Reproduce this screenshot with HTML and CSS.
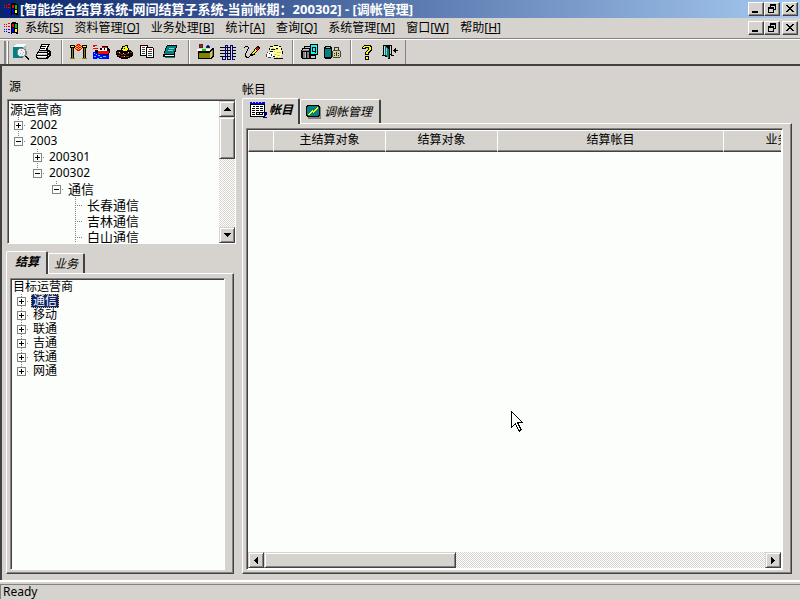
FILE: index.html
```html
<!DOCTYPE html>
<html lang="zh-CN">
<head>
<meta charset="utf-8">
<title>智能综合结算系统</title>
<link rel="stylesheet" href="styles.css">
</head>
<body>
<svg class="defs" aria-hidden="true">
  <symbol id="app" viewBox="0 0 16 12">
    <path fill="#f00" d="M1 2h1v1H1zM3 2h1v1H3zM5 1h2v1H5zM1 4h1v1H1zM3 4h1v1H3zM5 4h2v1H5z"/>
    <path fill="#00f" d="M1 7h1v1H1zM3 7h1v1H3zM5 7h2v1H5zM1 9h1v1H1zM3 9h1v1H3zM5 10h2v1H5z"/>
    <path d="M8 1h1V0h4v1h2v11h-2v-1H9v1H8z"/>
    <path fill="#f00" d="M9 2h2v3H9z"/><path fill="#0c0" d="M12 2h2v4h-2z"/><path fill="#00f" d="M9 6h2v4H9z"/><path fill="#ff0" d="M12 7h2v3h-2z"/>
  </symbol>
  <symbol id="min" viewBox="0 0 12 10"><path d="M2 7h6v2H2z"/></symbol>
  <symbol id="restore" viewBox="0 0 12 10"><path d="M4 0h6v6H8V5h1V2H5v1H4zM2 3h6v6H2zM3 5v3h4V5z" fill-rule="evenodd"/></symbol>
  <symbol id="close" viewBox="0 0 12 10"><path d="M2 1h2v1h1v1h2V2h1V1h2v1H9v1H8v1H7v1h1v1h1v1h1v1H8V7H7V6H5v1H4v1H2V7h1V6h1V5h1V4H4V3H3V2H2z"/></symbol>
  <symbol id="up" viewBox="0 0 7 4"><path d="M3 0h1v1h1v1h1v1h1v1H0V3h1V2h1V1h1z"/></symbol>
  <symbol id="down" viewBox="0 0 7 4"><path d="M0 0h7v1H6v1H5v1H4v1H3V3H2V2H1V1H0z"/></symbol>
  <symbol id="left" viewBox="0 0 4 7"><path d="M3 0h1v7H3V6H2V5H1V4H0V3h1V2h1V1h1z"/></symbol>
  <symbol id="right" viewBox="0 0 4 7"><path d="M0 0h1v1h1v1h1v1h1v1H3v1H2v1H1v1H0z"/></symbol>
</svg>

<header class="titlebar">
  <svg class="app-icon"><use href="#app"/></svg>
  <h1>[智能综合结算系统-网间结算子系统-当前帐期：200302] - [调帐管理]</h1>
  <div class="win-buttons">
    <button aria-label="最小化"><svg><use href="#min"/></svg></button>
    <button aria-label="还原"><svg><use href="#restore"/></svg></button>
    <button class="apart" aria-label="关闭"><svg><use href="#close"/></svg></button>
  </div>
</header>

<nav class="menubar">
  <svg class="app-icon"><use href="#app"/></svg>
  <div class="menus">
    <button>系统[<u>S</u>]</button>
    <button>资料管理[<u>O</u>]</button>
    <button>业务处理[<u>B</u>]</button>
    <button>统计[<u>A</u>]</button>
    <button>查询[<u>Q</u>]</button>
    <button>系统管理[<u>M</u>]</button>
    <button>窗口[<u>W</u>]</button>
    <button>帮助[<u>H</u>]</button>
  </div>
  <div class="win-buttons">
    <button aria-label="最小化窗口"><svg><use href="#min"/></svg></button>
    <button aria-label="还原窗口"><svg><use href="#restore"/></svg></button>
    <button class="apart" aria-label="关闭窗口"><svg><use href="#close"/></svg></button>
  </div>
</nav>

<div class="toolbar">
  <div class="tools">
    <span class="grip"></span>
    <button aria-label="预览"><svg viewBox="0 0 17 17"><path fill="#008284" d="M1 3h10v11H1z"/><path fill="#fff" d="M1 3l3-3h10l-3 3z"/><path fill="#a5c6c6" d="M11 3l3-3v6h-3z"/><path fill="#848284" d="M7 4h5v1h2v2h1v4h-1v1h-2v1H7v-1H6v-1H5V6h1V5h1z"/><path fill="#e7f3f3" d="M7 5h5v1h1v5h-1v1H7v-1H6V6h1z"/><path fill="#a5b6b6" d="M9 6h1v1H9zM11 8h1v1h-1zM8 9h1v1H8zM10 10h1v1h-1z"/><path d="M13 12h2v1h1v1h1v2h-1v-1h-1v-1h-1v-1h-1z"/></svg></button>
    <button aria-label="打印"><svg viewBox="0 0 17 17"><path d="M6 0h9v1h-1v2h-1v3h2v1h1v5h-1v1h-1v1h-1v1H2v-1H1v-4h1V8h1V7h1V5h1V2h1z"/><path fill="#fff" d="M6 1h7v1h-1v2h-1v2H5V5h1V3h1V1zM3 9h9v1H3zM2 12h10v1H2zM13 8h1v1h-1z"/><path d="M7 2h4v1H7zM6 4h4v1H6z"/><path fill="#c6c3c6" d="M4 7h8v1H4zM2 10h10v1H2zM3 13h8v1H3zM13 11h1v1h-1z"/></svg></button>
    <span class="sep"></span>
    <button aria-label="网间"><svg viewBox="0 0 17 17"><path d="M0 1h5v3H4v11H1V4H0zM12 1h5v3h-1v11h-3V4h-1z"/><path fill="#ff0" d="M1 2h3v1H1zM13 2h3v1h-3z"/><path fill="#848200" d="M2 4h1v10H2zM14 4h1v10h-1zM0 14h5v1H0zM12 14h5v1h-5z"/><path fill="#f00" d="M7 0h3v1H7zM6 1h2v1H6zM9 1h2v1H9zM5 2h1v1H5zM8 2h1v1H8zM11 2h1v1h-1zM6 3h2v1H6zM9 3h2v1H9zM5 4h1v1H5zM8 4h1v1H8zM11 4h1v1h-1zM6 5h2v1H6zM9 5h2v1H9zM7 6h3v1H7z"/><path fill="#fb3" d="M8 1h1v1H8zM6 2h2v1H6zM9 2h2v1H9zM8 3h1v1H8zM6 4h2v1H6zM9 4h2v1H9zM8 5h1v1H8z"/></svg></button>
    <button aria-label="船运"><svg viewBox="0 0 17 17"><path d="M2 6h5V4h2V2h6v2h1v1h1v4h-1v3H4V9H2z"/><path fill="#f00" d="M0 1h4v1H2v2h3v1H0zM5 7h11v2h-1v1H5zM9 3h5v1H9z"/><path fill="#fff" d="M9 4h2v2H9zM12 4h2v2h-2zM0 3h2v1H0zM5 6h9v1H5z"/><path fill="#00f" d="M0 8h3v1h2v1h5v1h6v4H0z"/><path fill="#0ff" d="M1 9h1v1H1zM3 10h1v1H3zM1 12h2v1H1zM5 11h2v1H5zM7 13h2v1H7zM10 12h3v1h-3zM4 14h2v1H4z"/></svg></button>
    <button aria-label="结算"><svg viewBox="0 0 17 17"><path d="M6 2h3V1h3v3h1v2h2v1h1v1h1v4h-1v1h-2v1h-2v1H5v-1H3v-1H1v-2H0V7h1V6h4V4h1z"/><path fill="#ff0" d="M6 5h1V3h2V2h2v2h1v2h-1v1H7V6H6z"/><path d="M8 4h1v1H8z"/><path fill="#a42000" d="M1 8h2v1H1zM3 9h2v1H3zM5 10h2v1H5zM8 10h2v1H8zM11 9h2v1h-2zM14 8h2v1h-2zM2 11h2v1H2zM5 12h3v1H5zM10 12h3v1h-3z"/><path fill="#fc6" d="M3 8h1v1H3zM7 9h1v1H7zM12 8h1v1h-1zM8 12h1v1H8z"/></svg></button>
    <button aria-label="对照"><svg viewBox="0 0 17 17"><path d="M1 1h8v2h5v1h1v10H7v-2H1z"/><path fill="#fff" d="M2 2h6v9H2zM8 4h6v9H8z"/><path d="M7 3h1v10H7z"/><path fill="#444" d="M3 5h3v1H3zM3 7h3v1H3zM3 9h3v1H3zM9 7h4v1H9zM9 9h4v1H9zM9 11h4v1H9z"/><path fill="#f00" d="M3 3h3v1H3zM10 5h3v1h-3z"/></svg></button>
    <button aria-label="记事"><svg viewBox="0 0 17 17"><path d="M5 1h10v3h-1v4h-1v6H3v-1H1v-3h1V7h1V4h1V2h1z"/><path fill="#008284" d="M5 2h9v2h-1v3h-1v3H2V9h1V7h1V4h1z"/><path fill="#fff" d="M3 11h9v1H3zM6 0h1v1H6zM8 0h1v1H8zM10 0h1v1h-1zM12 0h1v1h-1z"/><path fill="#008284" d="M3 13h10v1H3z"/><path fill="#8cc" d="M7 4h5v1H7zM6 6h5v1H6z"/></svg></button>
    <span class="sep"></span>
    <button aria-label="归档"><svg viewBox="0 0 17 17"><path d="M1 7h11l3-3h2v8l-3 3H1z"/><path fill="#848200" d="M2 9h11v5H2zM15 6h1v6h-1z"/><path fill="#c6c384" d="M13 8l2-2v6l-2 2z"/><path fill="#333" d="M2 0h4v4H2zM9 2h1V1h2v1h1v2H9z"/><path fill="#e00" d="M3 1h2v2H3z"/><path fill="#00f" d="M10 2h2v2h-2z"/><path fill="#fff" d="M0 5h5v2H0zM9 5h4v2H9z"/><path fill="#0d0" d="M5 5h4v2H5z"/></svg></button>
    <button aria-label="统计"><svg viewBox="0 0 17 17"><path d="M0 3h5v1H0zM0 6h5v1H0zM0 9h5v1H0zM0 12h5v1H0zM6 3h4v1H6zM6 6h4v1H6zM6 9h4v1H6zM6 12h4v1H6zM12 3h4v1h-4zM12 6h4v1h-4zM12 9h4v1h-4zM12 12h4v1h-4z"/><path fill="none" stroke="#00007b" d="M2.500 13v2h3V1.500h2V13v2h3V1.500h2V13v2h2"/></svg></button>
    <button aria-label="编辑"><svg viewBox="0 0 17 17"><path d="M1 3h1V2h3v1h1v2H5v2H4v2H3v3h1v1h2v-1h1v1H6v1H3v-1H2V9h1V7h1V5h1V3H2v1H1zM8 9h1V8h1V7h1V5h1V4h1V3h1V2h2v1h1v2h-1v1h-1v1h-1v1h-1v1h-1v2h-2v1H7v-2h1z"/><path fill="#ff0" d="M9 9h1V8h1V7h1V5h1v1h1v1h-1v1h-1v1h-1v1H9z"/><path fill="#f00" d="M14 3h1v1h1v1h-1v1h-1V5h-1V4h1z"/></svg></button>
    <button aria-label="处理"><svg viewBox="0 0 17 17"><path fill="#ffffa5" d="M4 3h3V2h6v1h2v2h1v6h-1v2h-2v1H9v-1H7v-2H6V8H4V6H3V4h1z"/><path fill="#dece42" d="M6 4h2v1H6zM9 5h3v1H9zM8 7h1v1H8zM11 8h4v1h-4zM8 10h2v1H8zM11 11h3v1h-3zM10 13h2v1h-2z"/><path d="M4 2h3v1H4zM8 1h4v1H8zM13 2h2v1h-2zM15 4h1v2h-1zM3 4h1v2H3zM5 5h4v1H5zM4 7h3v1H4zM10 4h2v1h-2zM16 7h1v3h-1zM7 12h2v1H7zM8 14h9v1H8z"/><path fill="#fff" d="M1 8h6v5H1z"/><path fill="#444" d="M1 8h1v1H1zM0 10h1v3H0zM3 9h1v1H3zM5 10h1v2H5zM2 13h3v1H2z"/></svg></button>
    <span class="sep"></span>
    <button aria-label="查询"><svg viewBox="0 0 17 17"><path d="M0 6h1V4h2V2h6V0h8v11h-2v4H1v-1H0z"/><path fill="#848284" d="M1 6h7v1H1zM2 8h2v6H2zM6 8h2v6H6z"/><path fill="#c6c3c6" d="M4 3h5v1H4zM2 5h6v1H2zM4 8h1v6H4zM10 12h4v2h-4z"/><path fill="#0ff" d="M10 1h6v9h-6z"/><path fill="none" stroke="#000" d="M11.500 3.500h3v4h-3zM13 7l2 2"/></svg></button>
    <button aria-label="加密"><svg viewBox="0 0 17 17"><path d="M0 3h1V2h6v1h1v11H7v1H1v-1H0z"/><path fill="#008284" d="M1 5h6v8H1z"/><path fill="#8cc" d="M2 3h4v1H2z"/><path fill="none" stroke="#333" d="M10.500 7V3.500h4V7"/><path fill="#444" d="M9 6h7v1h1v6h-1v1H9v-1H8V7h1z"/><path fill="#d6d384" d="M9 7h7v6H9z"/><path fill="#333" d="M12 8h1v4h-1zM10 9h1v1h-1zM14 9h1v1h-1zM10 11h1v1h-1zM14 11h1v1h-1z"/></svg></button>
    <span class="sep"></span>
    <button aria-label="帮助"><svg viewBox="0 0 17 17"><path d="M5 1h7v1h1v5h-1v1h-1v1h-1v2H6V8h1V7h1V6h1V4H7v1H3V3h1V2h1zM6 12h4v4H6z"/><path fill="#ff0" d="M5 2h6v1h1v3h-1v1h-1v1H9v2H7V8h1V7h1V6h1V3H6v1H4V3h1zM7 13h2v2H7z"/></svg></button>
    <button aria-label="退出"><svg viewBox="0 0 17 17"><path d="M1 1h9v10H8v4H6v-2H3v-1H1zM2 2v9h1V2zM8 2v8h1V2z" fill-rule="evenodd"/><path fill="#008284" d="M3 2l4 3v9l-4-3z"/><path fill="#8cc" d="M4 4h1v7H4z"/><path d="M11 6h1V5h1V4h1v2h2v1h-2v2h-1V8h-1V7h-1zM0 11h1v1H0zM9 11h3v1H9z"/></svg></button>
  </div>
</div>

<main class="workspace">
  <section class="side">
    <h2 class="label">源</h2>
    <div class="sunken source">
      <ul class="tree">
        <li class="root">源运营商</li>
        <li class="row"><span class="joint"><button class="expander plus" aria-label="展开 2002"></button></span><span class="num">2002</span></li>
        <li class="row"><span class="joint last"><button class="expander" aria-label="折叠 2003"></button></span><span class="num">2003</span></li>
        <li class="row level2"><span class="joint"><button class="expander plus" aria-label="展开 200301"></button></span><span class="num">200301</span></li>
        <li class="row level2"><span class="joint last"><button class="expander" aria-label="折叠 200302"></button></span><span class="num">200302</span></li>
        <li class="row level3"><span class="joint last"><button class="expander" aria-label="折叠 通信"></button></span><span>通信</span></li>
        <li class="row level4"><span class="joint leaf"></span><span>长春通信</span></li>
        <li class="row level4"><span class="joint leaf"></span><span>吉林通信</span></li>
        <li class="row level4"><span class="joint leaf"></span><span>白山通信</span></li>
      </ul>
      <div class="scroll vertical">
        <button class="arrow" aria-label="向上滚动"><svg class="glyph-v"><use href="#up"/></svg></button>
        <span class="thumb"></span>
        <button class="arrow end" aria-label="向下滚动"><svg class="glyph-v"><use href="#down"/></svg></button>
      </div>
    </div>
    <div class="tabs">
      <button class="tab active">结算</button>
      <button class="tab">业务</button>
    </div>
    <div class="panel">
      <div class="sunken target">
        <ul class="tree compact">
          <li class="root">目标运营商</li>
          <li class="row"><span class="joint"><button class="expander plus" aria-label="展开 通信"></button></span><span class="selected">通信</span></li>
          <li class="row"><span class="joint"><button class="expander plus" aria-label="展开 移动"></button></span><span>移动</span></li>
          <li class="row"><span class="joint"><button class="expander plus" aria-label="展开 联通"></button></span><span>联通</span></li>
          <li class="row"><span class="joint"><button class="expander plus" aria-label="展开 吉通"></button></span><span>吉通</span></li>
          <li class="row"><span class="joint"><button class="expander plus" aria-label="展开 铁通"></button></span><span>铁通</span></li>
          <li class="row"><span class="joint last"><button class="expander plus" aria-label="展开 网通"></button></span><span>网通</span></li>
        </ul>
      </div>
    </div>
  </section>

  <section class="content">
    <h2 class="label low">帐目</h2>
    <div class="tabs">
      <button class="tab active wide"><svg class="tab-icon" viewBox="0 0 17 17"><path d="M0 1h15v14H0z"/><path fill="#fff" d="M1 3h13v11H1z"/><path fill="#00f" d="M0 0h2v1h1V0h2v1h1V0h2v1h1V0h2v1h1V0h3v2H0z"/><path d="M3 4h2v1H3zM6 4h3v1H6zM10 4h3v1h-3zM2 6h3v1H2zM6 6h3v1H6zM10 6h3v1h-3zM2 8h3v1H2zM6 8h3v1H6zM10 8h3v1h-3zM2 10h3v1H2zM6 10h7v3H6zM2 12h3v1H2z"/><path fill="#fff" d="M7 11h2v1H7zM10 11h2v1h-2z"/><path fill="#00007b" d="M13 10h4v3h-1v1h-1v1h2v1h-4v-2h1v-1h1v-2h-2z"/></svg>帐目</button>
      <button class="tab wide"><svg class="tab-icon" viewBox="0 0 17 17"><path fill="#848284" d="M3 4h13v12H3z"/><path d="M2 2h12v1h1v10h-1v1H2v-1H1V3h1z"/><path fill="#008284" d="M3 3h10v1h1v8h-1v1H3v-1H2V4h1z"/><path fill="#ff0" d="M3 11h1v-1h1V9h1V8h1V7h1v1h1V7h1V6h1V5h1V4h1v2h-1v1h-1v1h-1v1H9v1H8V9H7v1H6v1H5v1H3z"/></svg>调帐管理</button>
    </div>
    <div class="panel">
      <div class="sunken grid">
        <div class="viewport">
          <table>
            <colgroup><col class="c-mark"><col class="c-std"><col class="c-std"><col class="c-item"><col class="c-more"></colgroup>
            <thead><tr><th></th><th>主结算对象</th><th>结算对象</th><th>结算帐目</th><th>业务类型</th></tr></thead>
          </table>
        </div>
        <div class="scroll horizontal">
          <button class="arrow" aria-label="向左滚动"><svg class="glyph-h"><use href="#left"/></svg></button>
          <span class="thumb"></span>
          <button class="arrow end" aria-label="向右滚动"><svg class="glyph-h"><use href="#right"/></svg></button>
        </div>
      </div>
    </div>
  </section>
</main>

<footer class="status"><span>Ready</span></footer>
<svg class="pointer" viewBox="0 0 12 21" aria-hidden="true"><path fill="#fff" stroke="#000" d="M.5.500v16l4-4 3 7q1 1 2 0 1-1 0-2l-3-6h5z"/></svg>
</body>
</html>
```

FILE: styles.css
```css
:root {
  --face: #d6d3ce;
  --shade: #848284;
  --dark: #424142;
  --field: #fcfefc;
}

* { box-sizing: border-box; }

body {
  margin: 0;
  height: 100vh;
  display: flex;
  flex-direction: column;
  overflow: hidden;
  background: var(--face);
  color: #000;
  font: 12px/16px "Noto Sans", "Noto Sans CJK SC", sans-serif;
}

.defs { position: absolute; width: 0; height: 0; }
svg { shape-rendering: crispEdges; flex: none; }

button {
  margin: 0;
  padding: 0;
  border: 0;
  background: none;
  color: inherit;
  font: inherit;
}

h1, h2 { margin: 0; white-space: nowrap; }

/* Title and menu */
.titlebar, .menubar {
  flex: none;
  display: flex;
  align-items: center;
  height: 18px;
  padding: 0 2px 0 3px;
}
.titlebar {
  background: linear-gradient(to right, #0a246a, #a6caf0);
  color: #fff;
}
.titlebar h1 { margin-left: 1px; font-size: 13px; line-height: 18px; font-weight: bold; }
.app-icon { width: 16px; height: 12px; }
.menubar { height: 21px; border-bottom: 1px solid var(--shade); }
.menus { display: flex; gap: 11px; margin-left: 6px; white-space: nowrap; }

.win-buttons { display: flex; margin-left: auto; }
.win-buttons button {
  display: flex;
  width: 16px;
  height: 14px;
  padding: 1px;
  border: 1px solid;
  border-color: #fff var(--dark) var(--dark) #fff;
  background: var(--face);
  box-shadow: inset -1px -1px var(--shade);
}
.win-buttons svg { width: 12px; height: 10px; }
.win-buttons .apart { margin-left: 2px; }

/* Toolbar */
.toolbar {
  flex: none;
  height: 27px;
  border-top: 1px solid #fff;
  border-bottom: 2px solid var(--dark);
}
.tools {
  display: flex;
  align-items: stretch;
  width: max-content;
  height: 24px;
  padding-right: 3px;
  border-right: 1px solid var(--shade);
}
.tools button { display: flex; align-items: center; justify-content: center; width: 23px; }
.tools svg { width: 17px; height: 17px; }
.grip {
  width: 5px;
  margin: 1px 0 0 4px;
  border: solid;
  border-width: 0 1px;
  border-color: #fff var(--shade);
  box-shadow: inset 1px 0 var(--shade), inset -1px 0 #fff;
}
.sep { width: 2px; margin: 0 4px 0 6px; border-left: 1px solid var(--shade); border-right: 1px solid #fff; }

/* Workspace */
.workspace {
  flex: 1;
  min-height: 0;
  display: grid;
  grid-template-columns: 230px minmax(0, 1fr);
  gap: 6px;
  padding: 13px 8px 6px 4px;
  border-left: 2px solid var(--dark);
}
.side, .content { display: flex; flex-direction: column; min-height: 0; }
.label { height: 20px; padding-left: 3px; font-size: 12px; font-weight: normal; line-height: 16px; }
.content .label { padding-left: 0; }
.low { height: 19px; padding-top: 3px; }

.sunken {
  display: flex;
  background: var(--field);
  border: 1px solid;
  border-color: var(--shade) #fff #fff var(--shade);
  box-shadow: inset 1px 1px var(--dark);
  padding: 1px 0 0 1px;
  overflow: hidden;
}
.source { flex: none; height: 145px; margin-left: 1px; }
.side .tabs { margin-top: 7px; }
.side .panel { margin-right: 2px; }

.tabs { flex: none; display: flex; align-items: flex-end; }
.tab {
  display: flex;
  align-items: center;
  height: 20px;
  padding: 0 5px;
  border: solid;
  border-width: 1px 2px 0 1px;
  border-color: #fff var(--dark) transparent #fff;
  border-radius: 2px 2px 0 0;
  font-style: italic;
  white-space: nowrap;
}
.tab.active { position: relative; height: 23px; padding: 0 7px 2px 8px; margin-bottom: -1px; font-weight: bold; background: var(--face); }
.tab.wide { height: 24px; padding: 0 7px 0 4px; gap: 2px; }
.tab.active.wide { height: 26px; padding: 0 5px 3px 7px; }
.tab-icon { width: 17px; height: 17px; }

.panel {
  flex: 1;
  min-height: 0;
  display: flex;
  padding: 4px 8px 3px 3px;
  border: 1px solid;
  border-color: #fff var(--dark) var(--dark) #fff;
  box-shadow: inset -1px -1px var(--shade);
}
.panel > .sunken { flex: 1; min-width: 0; }

/* Trees */
.tree { flex: 1; margin: 0; padding: 0; list-style: none; font-size: 13px; line-height: 16px; white-space: nowrap; }
.root { padding-left: 1px; }
.row, .root { height: 16px; }
.row { display: flex; align-items: center; padding-left: 5px; }
.level2 { padding-left: 24px; }
.level3 { padding-left: 43px; }
.level4 { padding-left: 62px; }
.num { font-size: 12px; }
.joint {
  display: flex;
  align-items: center;
  width: 14px;
  height: 100%;
  margin-right: 2px;
  background:
    repeating-linear-gradient(var(--shade) 0 1px, transparent 1px 2px) 4px 0 / 1px 100% no-repeat,
    repeating-linear-gradient(to right, var(--shade) 0 1px, transparent 1px 2px) 4px 50% / 8px 1px no-repeat;
}
.joint.last {
  background-size: 1px 50%, 8px 1px;
}
.expander {
  width: 9px;
  height: 9px;
  border: 1px solid var(--shade);
  background: linear-gradient(#000, #000) center / 5px 1px no-repeat, var(--field);
}
.expander.plus {
  background:
    linear-gradient(#000, #000) center / 5px 1px no-repeat,
    linear-gradient(#000, #000) center / 1px 5px no-repeat,
    var(--field);
}
.compact { font-size: 12px; line-height: 14px; }
.compact .row, .compact .root { height: 14px; }
.selected { margin-left: -2px; padding: 0 2px; background: #0a246a; color: #fff; outline: 1px dotted #e0b060; outline-offset: -1px; }

/* Scroll bars */
.scroll {
  flex: none;
  display: flex;
  background: repeating-conic-gradient(#fff 0 25%, var(--face) 0 50%) 0 0 / 2px 2px;
}
.vertical { flex-direction: column; width: 16px; }
.arrow, .thumb {
  display: flex;
  align-items: center;
  justify-content: center;
  width: 16px;
  height: 16px;
  background: var(--face);
  border: 1px solid;
  border-color: var(--face) var(--dark) var(--dark) var(--face);
  box-shadow: inset 1px 1px #fff, inset -1px -1px var(--shade);
}
.vertical .thumb { height: 42px; }
.vertical .end { margin-top: auto; }
.horizontal .thumb { width: 36%; }
.horizontal .end { margin-left: auto; }
.glyph-v { width: 7px; height: 4px; }
.glyph-h { width: 4px; height: 7px; }

/* Account grid */
.grid { flex-direction: column; padding: 1px; }
.viewport { flex: 1; min-height: 0; overflow: hidden; }
table { table-layout: fixed; width: 607px; border-collapse: separate; border-spacing: 0; }
.c-mark { width: 25px; }
.c-std { width: 112px; }
.c-item { width: 226px; }
.c-more { width: 132px; }
th {
  height: 22px;
  padding: 0 0 2px;
  background: var(--face);
  border: 1px solid;
  border-color: #fff var(--shade) var(--dark) #fff;
  border-right-width: 0;
  box-shadow: inset 0 -1px var(--shade);
  font-weight: normal;
  line-height: 16px;
}

.status {
  flex: none;
  height: 20px;
  padding-top: 2px;
  border-top: 2px solid #fff;
}
.status span { display: block; padding-left: 2px; border-top: 1px solid var(--shade); border-left: 1px solid var(--shade); line-height: 14px; }

.pointer { position: absolute; left: 511px; top: 411px; width: 12px; height: 21px; }
```
